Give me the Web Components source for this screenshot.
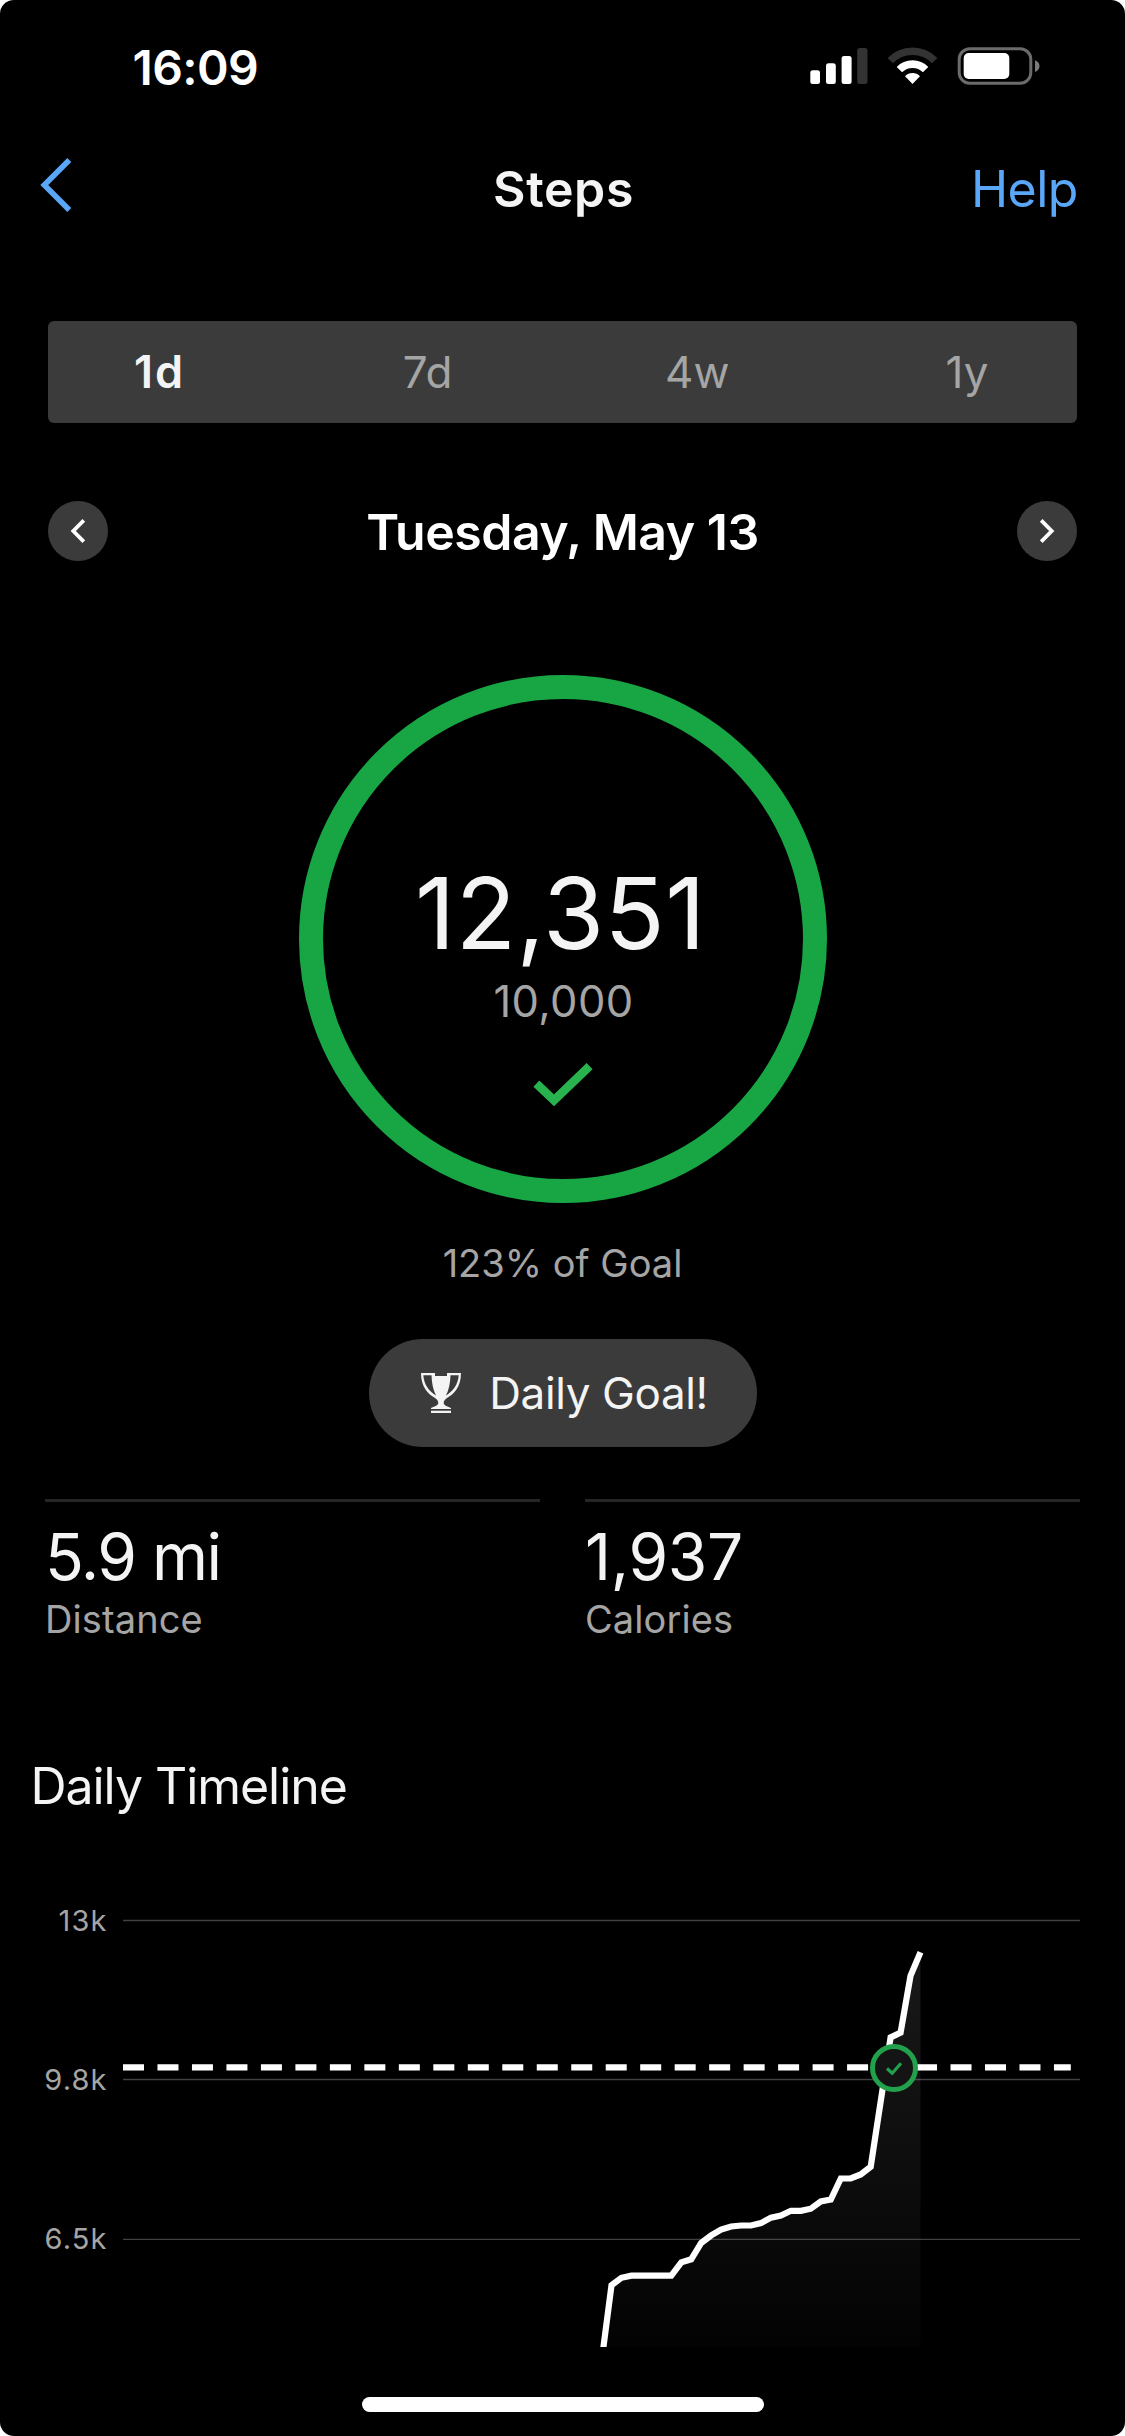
<!DOCTYPE html>
<html lang="en">
<head>
<meta charset="utf-8">
<title>Steps</title>
<style>
  body {
    margin: 0;
    background: #fff;
    color: #f4f4f4;
    font-family: Inter, "Liberation Sans", sans-serif;
  }
</style>
</head>
<body>
<steps-screen>
  <status-bar>16:09</status-bar>
  <nav-bar>Steps<span slot="action">Help</span></nav-bar>
  <range-tabs>
    <range-tab selected>1d</range-tab>
    <range-tab>7d</range-tab>
    <range-tab>4w</range-tab>
    <range-tab>1y</range-tab>
  </range-tabs>
  <date-picker>Tuesday, May 13</date-picker>
  <goal-ring>12,351<span slot="goal">10,000</span></goal-ring>
  <goal-caption>123% of Goal</goal-caption>
  <goal-badge>Daily Goal!</goal-badge>
  <stat-row>
    <stat-item style="--value-spacing: -1.5px">5.9 mi<span slot="label">Distance</span></stat-item>
    <stat-item style="--value-spacing: -.3px">1,937<span slot="label">Calories</span></stat-item>
  </stat-row>
  <section-title>Daily Timeline</section-title>
  <timeline-chart></timeline-chart>
  <home-indicator></home-indicator>
</steps-screen>

<script>
/**
 * Registers a custom element that only needs a template.
 *
 * @param {string} name - The tag name.
 * @param {string} html - The markup and styles of the shadow root.
 */
function define (name, html) {
  const template = document.createElement('template')
  template.innerHTML = html

  customElements.define(name, class extends HTMLElement {
    constructor () {
      super()
      this.attachShadow({ mode: 'open' })
        .appendChild(template.content.cloneNode(true))
    }
  })
}

define('steps-screen', `
  <style>
    :host {
      display: flex;
      flex-direction: column;
      width: 1125px;
      height: 2436px;
      border-radius: 14px;
      background: #000;
      overflow: hidden;
    }
  </style>
  <slot></slot>
`)

define('status-bar', `
  <style>
    :host {
      display: flex;
      align-items: center;
      justify-content: space-between;
      box-sizing: border-box;
      height: 132px;
      padding: 0 84px 0 132.5px;
      color: #fff;
      font-size: 48px;
      font-weight: 600;
      letter-spacing: -.6px;
    }
    .time {
      padding-top: 2px;
    }
    svg {
      display: block;
    }
  </style>
  <div class="time"><slot></slot></div>
  <svg width="231" height="40" viewBox="810 46 231 40">
    <g fill="#fff">
      <rect x="810.3" y="70.3" width="9.7" height="13.7" rx="2.5"/>
      <rect x="826" y="63.3" width="9.8" height="20.7" rx="2.5"/>
      <rect x="841.6" y="56" width="10" height="28" rx="2.5"/>
      <rect x="857.2" y="48" width="10.3" height="36" rx="2.5" fill="#333"/>
    </g>
    <g fill="none" stroke-width="7.6">
      <path stroke="#333" d="M890.3 60.6A31 31 0 0 1 934.7 60.6"/>
      <path stroke="#fff" d="M899.4 69.6A18.4 18.4 0 0 1 925.6 69.6"/>
    </g>
    <path fill="#fff" d="M905 76.2A10.5 10.5 0 0 1 920 76.2L912.5 84Z"/>
    <rect x="959.2" y="48.8" width="71.6" height="34.4" rx="10.5" fill="none" stroke="#6b6b6b" stroke-width="3"/>
    <rect x="963.7" y="53" width="45.6" height="26" rx="5" fill="#fff"/>
    <path fill="#7a7a7a" d="M1035 60.2C1041 62 1041 70 1035 72Z"/>
  </svg>
`)

define('nav-bar', `
  <style>
    :host {
      display: grid;
      grid-template-columns: 1fr auto 1fr;
      align-items: center;
      box-sizing: border-box;
      height: 113px;
      padding: 0 47px 0 40px;
      font-size: 50px;
    }
    svg {
      display: block;
      margin-bottom: 7px;
    }
    .title {
      margin-left: 9px;
      font-weight: 600;
      letter-spacing: .6px;
    }
    .action {
      justify-self: end;
      color: #5aa7f8;
      letter-spacing: -.5px;
    }
  </style>
  <svg width="34" height="54" viewBox="0 0 34 54">
    <path d="M29.3 2L4.3 27L29.3 52" fill="none" stroke="#5aa7f8" stroke-width="5.6"/>
  </svg>
  <div class="title"><slot></slot></div>
  <div class="action"><slot name="action"></slot></div>
`)

define('range-tabs', `
  <style>
    :host {
      display: flex;
      justify-content: space-between;
      height: 102px;
      margin: 76px 48px 0;
      border-radius: 6px;
      background: #3b3b3b;
    }
  </style>
  <slot></slot>
`)

define('range-tab', `
  <style>
    :host {
      width: 220px;
      line-height: 102px;
      text-align: center;
      font-size: 44px;
      color: #a5a5a5;
    }
    :host([selected]) {
      color: #f4f4f4;
      font-size: 45px;
      font-weight: 600;
      letter-spacing: 2px;
      text-indent: 3px;
    }
  </style>
  <slot></slot>
`)

define('date-picker', `
  <style>
    :host {
      display: flex;
      align-items: center;
      justify-content: space-between;
      height: 60px;
      margin: 78px 48px 0;
      color: #fff;
      font-size: 50px;
      font-weight: 600;
      letter-spacing: -.5px;
    }
    .date {
      padding-top: 2px;
    }
    svg {
      display: block;
    }
    path {
      fill: none;
      stroke: #fff;
      stroke-width: 3.8;
    }
  </style>
  <svg width="60" height="60" viewBox="0 0 60 60">
    <circle cx="30" cy="30" r="30" fill="#3b3b3b"/>
    <path d="M35.8 19.3L25.3 30L35.8 40.7"/>
  </svg>
  <div class="date"><slot></slot></div>
  <svg width="60" height="60" viewBox="0 0 60 60">
    <circle cx="30" cy="30" r="30" fill="#3b3b3b"/>
    <path d="M24.2 19.3L34.7 30L24.2 40.7"/>
  </svg>
`)

define('goal-ring', `
  <style>
    :host {
      display: flex;
      flex-direction: column;
      align-items: center;
      align-self: center;
      box-sizing: border-box;
      width: 528px;
      height: 528px;
      margin: 114px 0 1px 1px;
      padding-top: 154px;
      border: 24px solid #18a544;
      border-radius: 50%;
    }
    .value {
      margin-right: 5px;
      font-size: 99px;
      line-height: 120px;
      letter-spacing: .5px;
    }
    .goal {
      margin: 2px 0 0 1px;
      color: #a5a5a5;
      font-size: 43.5px;
      line-height: 52px;
      letter-spacing: .4px;
    }
    svg {
      display: block;
      margin-top: 36px;
    }
  </style>
  <div class="value"><slot></slot></div>
  <div class="goal"><slot name="goal"></slot></div>
  <svg width="60" height="44" viewBox="0 0 60 44">
    <path d="M3.4 20.7L21 37.3L56.6 3.1" fill="none" stroke="#29b34e" stroke-width="8.6"/>
  </svg>
`)

define('goal-caption', `
  <style>
    :host {
      display: block;
      margin-top: 35px;
      color: #a5a5a5;
      font-size: 38px;
      line-height: 48px;
      text-align: center;
    }
  </style>
  <slot></slot>
`)

define('goal-badge', `
  <style>
    :host {
      display: flex;
      align-items: center;
      align-self: center;
      gap: 28.7px;
      box-sizing: border-box;
      width: 388px;
      height: 108px;
      margin-top: 52px;
      padding-left: 52px;
      border-radius: 54px;
      background: #3b3b3b;
      font-size: 44px;
      letter-spacing: -.38px;
    }
    svg {
      display: block;
    }
  </style>
  <svg width="40" height="40" viewBox="0 0 40 40" fill="#f4f4f4">
    <path fill-rule="evenodd" d="M0 0H14V3H26V0H40C40 14 33 21 26 25C23.5 27 22.7 28 22.7 30C23 33 27 33.5 30 35V36H10V35C13 33.5 17 33 17.3 30C17.3 28 16.5 27 14 25C7 21 0 14 0 0Z
      M2.3 2.3H10.5C10.8 10 12 17 15 22.5C8 18 3 12 2.3 2.3Z
      M37.7 2.3H29.5C29.2 10 28 17 25 22.5C32 18 37 12 37.7 2.3Z"/>
    <path d="M10 37.7H30V40H10Z"/>
  </svg>
  <slot></slot>
`)

define('stat-row', `
  <style>
    :host {
      display: grid;
      grid-template-columns: 1fr 1fr;
      gap: 45px;
      margin: 52px 45px 0;
    }
  </style>
  <slot></slot>
`)

define('stat-item', `
  <style>
    :host {
      display: block;
      padding-top: 19px;
      border-top: 3px solid #252525;
    }
    .value {
      font-size: 64px;
      line-height: 72px;
      letter-spacing: var(--value-spacing);
    }
    .label {
      margin-top: 1px;
      color: #a5a5a5;
      font-size: 38px;
      line-height: 50px;
      letter-spacing: .1px;
    }
  </style>
  <div class="value"><slot></slot></div>
  <div class="label"><slot name="label"></slot></div>
`)

define('section-title', `
  <style>
    :host {
      display: block;
      margin: 112px 30.5px 0;
      font-size: 50px;
      line-height: 60px;
      letter-spacing: -1.05px;
    }
  </style>
  <slot></slot>
`)

define('home-indicator', `
  <style>
    :host {
      align-self: center;
      width: 402px;
      height: 15px;
      margin-top: 50px;
      border-radius: 7.5px;
      background: #fff;
    }
  </style>
`)

/**
 * The steps of the day, one point for every 15 minutes.
 */
class TimelineChart extends HTMLElement {
  constructor () {
    super()

    this.left = 123
    this.right = 1080
    this.firstQuarter = 48
    this.gridLines = [['13k', 20.5], ['9.8k', 179.5], ['6.5k', 339.3]]

    // Heights of the line inside the chart, from the first quarter on.
    this.points = [
      461.9, 385.3, 377.8, 375.6, 375.6, 375.6, 375.6, 375.6, 362.4, 359.3, 342.9,
      335.4, 329.6, 326.5, 325.5, 325.5, 323.1, 317.6, 315.6, 310.8, 310.8,
      308.7, 301.5, 299.5, 278.5, 278.5, 274.5, 266.7, 202, 137.4, 132.6,
      75.9, 52.3
    ]

    this.attachShadow({ mode: 'open' })
  }

  /**
   * Called after the element is inserted into the DOM.
   */
  connectedCallback () {
    const step = (this.right - this.left) / 96
    const coords = this.points.map((y, i) => {
      return [(this.left + (this.firstQuarter + i) * step).toFixed(1), y]
    })
    const line = coords.map(c => c.join(' ')).join('L')
    const firstX = coords[0][0]

    this.shadowRoot.innerHTML = `
      <style>
        :host {
          display: block;
          height: 447px;
          margin-top: 84px;
          overflow: hidden;
        }
        svg {
          display: block;
        }
        text {
          fill: #a5a5a5;
          font-size: 29px;
          letter-spacing: 1.1px;
          text-anchor: end;
        }
      </style>
      <svg width="1125" height="447" viewBox="0 0 1125 447">
        <defs>
          <linearGradient id="area" gradientUnits="userSpaceOnUse" x1="0" y1="52" x2="0" y2="500">
            <stop offset="0" stop-color="#fff" stop-opacity=".1"/>
            <stop offset="1" stop-color="#fff" stop-opacity="0"/>
          </linearGradient>
        </defs>
        ${this.gridLines.map(([label, y]) => `
          <text x="107.5" y="${y + 10}">${label}</text>
          <path d="M${this.left} ${y}H${this.right}" stroke="#404040" stroke-width="1.3"/>
        `).join('')}
        <path d="M${line}V470H${firstX}Z" fill="url(#area)"/>
        <path d="M${this.left} 167.4H1070.8" stroke="#fff" stroke-width="6.2" stroke-dasharray="21 13.48"/>
        <path d="M${line}" fill="none" stroke="#fff" stroke-width="6.2"/>
        <circle cx="894" cy="168" r="21.5" fill="#141414" stroke="#22a04b" stroke-width="5"/>
        <path d="M887 168.5L892.2 173.3L901 163.2" fill="none" stroke="#22a04b" stroke-width="3.2"/>
      </svg>
    `
  }
}
customElements.define('timeline-chart', TimelineChart)
</script>
</body>
</html>
